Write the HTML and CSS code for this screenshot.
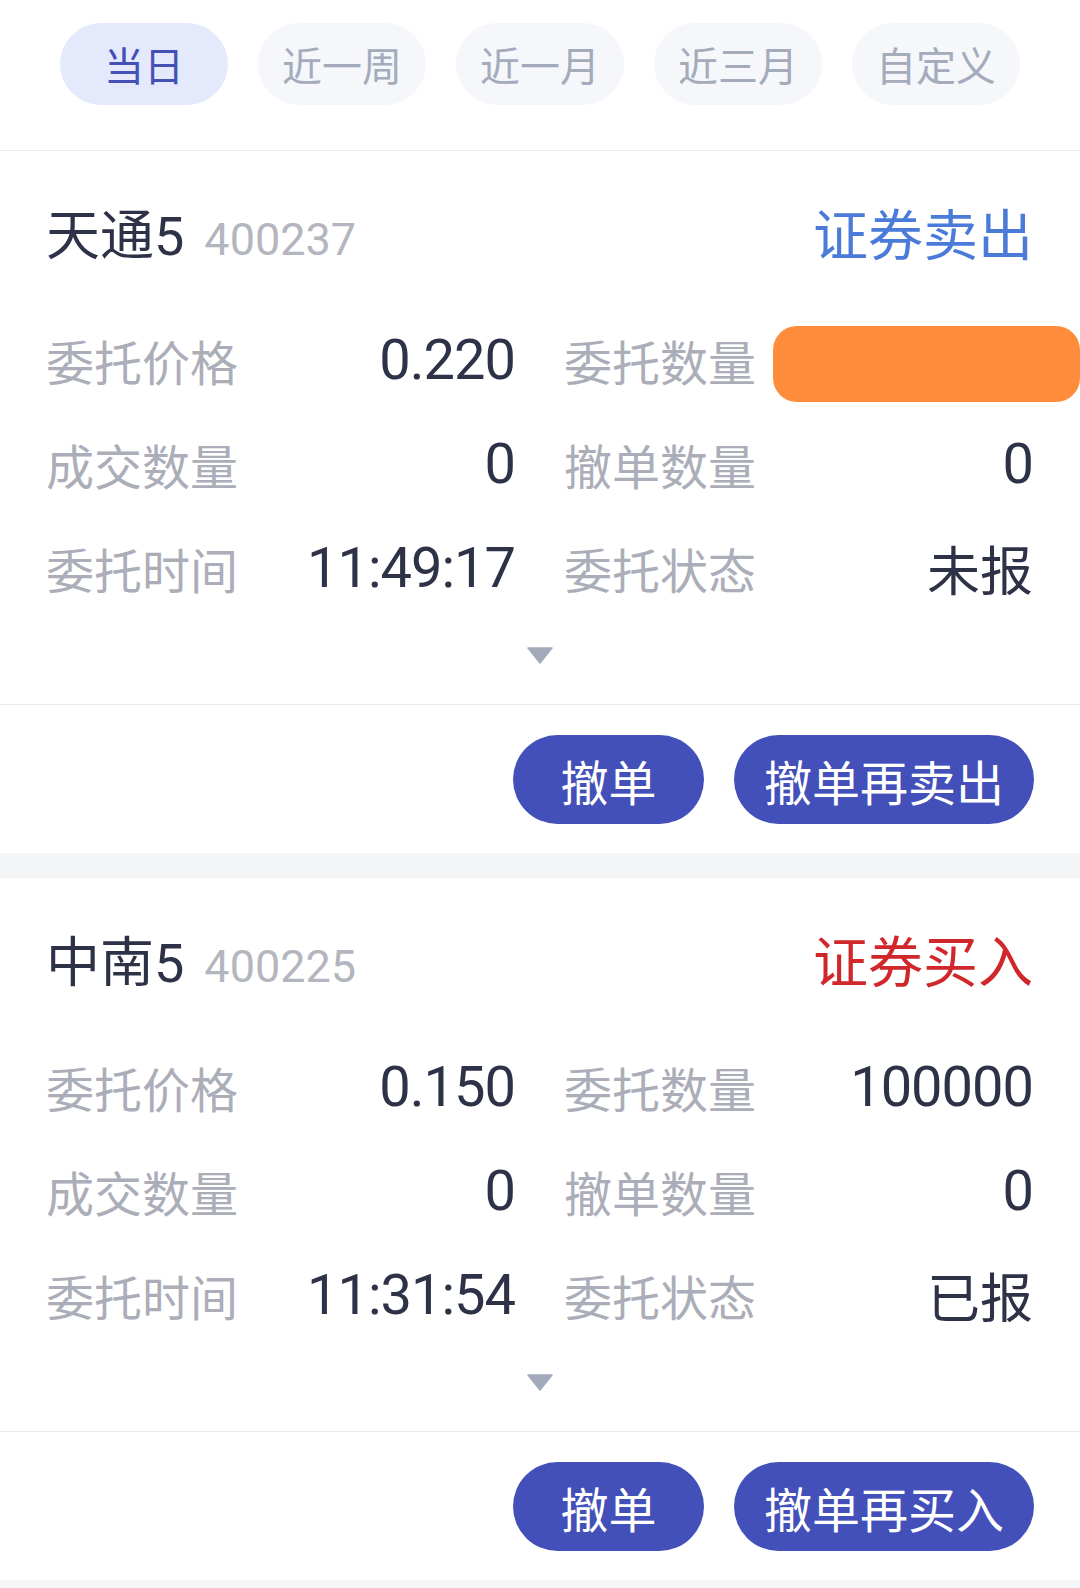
FILE: index.html
```html
<!DOCTYPE html>
<html lang="zh-CN">
<head>
  <meta charset="UTF-8">
  <title>当日委托</title>
  <link rel="stylesheet" href="styles.css">
</head>
<body>
  <div class="tabs">
    <span class="tab active">当日</span>
    <span class="tab">近一周</span>
    <span class="tab">近一月</span>
    <span class="tab">近三月</span>
    <span class="tab">自定义</span>
  </div>

  <div class="card">
    <div class="card-body">
      <div class="card-head">
        <div class="stock">
          <span class="stock-name">天通5</span>
          <span class="stock-code">400237</span>
        </div>
        <span class="side sell">证券卖出</span>
      </div>
      <div class="rows">
        <div class="cell"><span class="label">委托价格</span><span class="value">0.220</span></div>
        <div class="cell"><span class="label">委托数量</span><span class="value"></span></div>
        <div class="cell"><span class="label">成交数量</span><span class="value">0</span></div>
        <div class="cell"><span class="label">撤单数量</span><span class="value">0</span></div>
        <div class="cell"><span class="label">委托时间</span><span class="value">11:49:17</span></div>
        <div class="cell"><span class="label">委托状态</span><span class="value cn">未报</span></div>
      </div>
      <div class="more">
        <svg width="26" height="17" viewBox="0 0 26 17"><polygon points="1,1 25,1 13,16" fill="#a3abbb" stroke="#a3abbb" stroke-width="1.5" stroke-linejoin="round"/></svg>
      </div>
    </div>
    <div class="card-foot">
      <button class="btn">撤单</button>
      <button class="btn">撤单再卖出</button>
    </div>
    <span class="mask"></span>
  </div>

  <div class="gap"></div>

  <div class="card">
    <div class="card-body">
      <div class="card-head">
        <div class="stock">
          <span class="stock-name">中南5</span>
          <span class="stock-code">400225</span>
        </div>
        <span class="side buy">证券买入</span>
      </div>
      <div class="rows">
        <div class="cell"><span class="label">委托价格</span><span class="value">0.150</span></div>
        <div class="cell"><span class="label">委托数量</span><span class="value">100000</span></div>
        <div class="cell"><span class="label">成交数量</span><span class="value">0</span></div>
        <div class="cell"><span class="label">撤单数量</span><span class="value">0</span></div>
        <div class="cell"><span class="label">委托时间</span><span class="value">11:31:54</span></div>
        <div class="cell"><span class="label">委托状态</span><span class="value cn">已报</span></div>
      </div>
      <div class="more">
        <svg width="26" height="17" viewBox="0 0 26 17"><polygon points="1,1 25,1 13,16" fill="#a3abbb" stroke="#a3abbb" stroke-width="1.5" stroke-linejoin="round"/></svg>
      </div>
    </div>
    <div class="card-foot">
      <button class="btn">撤单</button>
      <button class="btn">撤单再买入</button>
    </div>
  </div>

  <div class="gap"></div>
</body>
</html>
```

FILE: styles.css
```css
body {
  margin: 0;
  width: 1080px;
  background-color: #ffffff;
  font-family: Roboto, "Noto Sans CJK SC", sans-serif;
  color: #2d3246;
}

.tabs {
  display: flex;
  gap: 30px;
  height: 127px;
  padding: 23px 0 0 60px;
  border-bottom: 1px solid #e8e9ec;
}

.tab {
  width: 168px;
  height: 82px;
  border-radius: 41px;
  background-color: #f5f7fb;
  color: #a4abbb;
  font-family: "Noto Sans CJK SC", sans-serif;
  font-size: 40px;
  display: flex;
  align-items: center;
  justify-content: center;
}

.tab.active {
  background-color: #e4eafc;
  color: #4450b6;
}

.card {
  position: relative;
  background-color: #ffffff;
}

.card-body {
  padding: 39px 47px 40px 46px;
  border-bottom: 1px solid #e8e9ec;
}

.card-head {
  height: 82px;
  display: flex;
  align-items: center;
  justify-content: space-between;
}

.stock {
  display: flex;
  align-items: baseline;
  gap: 20px;
}

.stock-name {
  font-size: 54px;
  color: #2d3246;
}

.stock-code {
  font-size: 45px;
  color: #b3b6be;
}

.side {
  font-family: "Noto Sans CJK SC", sans-serif;
  font-size: 55px;
}

.side.sell {
  color: #4a7bd8;
}

.side.buy {
  color: #d0272b;
}

.rows {
  margin-top: 36px;
  display: grid;
  grid-template-columns: 1fr 1fr;
  column-gap: 49px;
}

.cell {
  height: 104px;
  display: flex;
  align-items: center;
  justify-content: space-between;
}

.label {
  font-family: "Noto Sans CJK SC", sans-serif;
  font-size: 48px;
  color: #abaeb8;
}

.value {
  font-size: 56px;
  letter-spacing: -1px;
  color: #2d3246;
}

.value.cn {
  font-family: "Noto Sans CJK SC", sans-serif;
  font-size: 53px;
  letter-spacing: 0;
}

.more {
  margin-top: 27px;
  height: 17px;
  display: flex;
  justify-content: center;
}

.more svg {
  display: block;
}

.card-foot {
  display: flex;
  justify-content: flex-end;
  gap: 30px;
  padding: 30px 46px 29px 0;
}

.btn {
  min-width: 191px;
  height: 89px;
  padding: 0 30px;
  border: none;
  border-radius: 45px;
  background-color: #4350b9;
  color: #ffffff;
  font-family: "Noto Sans CJK SC", sans-serif;
  font-size: 48px;
  cursor: pointer;
}

.mask {
  position: absolute;
  top: 175px;
  left: 773px;
  right: 0;
  height: 76px;
  border-radius: 24px;
  background-color: #fe8c3b;
}

.gap {
  height: 25px;
  background-color: #f4f5f7;
}
```
